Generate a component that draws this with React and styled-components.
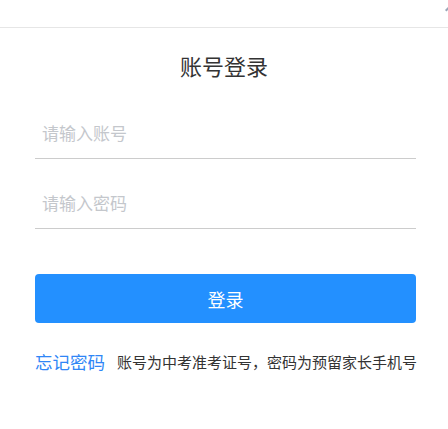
import React from 'react';
import styled, { createGlobalStyle } from 'styled-components';

const GlobalStyle = createGlobalStyle`
    html, body {
        margin: 0;
        padding: 0;
        background: #fff;
        font-family: "Noto Sans CJK SC", "Noto Sans", sans-serif;
    }
    input::placeholder {
        color: #c4c7cc;
    }
`;

const Page = styled.div`
    width: 448px;
    height: 429px;
    background: #fff;
    overflow: hidden;
`;

const TopBar = styled.div`
    position: relative;
    height: 27px;
    border-bottom: 1px solid #e6e6e6;
`;

const CornerMark = styled.span`
    position: absolute;
    right: -2px;
    top: 8px;
    width: 5px;
    height: 2px;
    background: #9aa6b8;
    transform: rotate(-45deg);
`;

const Title = styled.h2`
    margin: 22px 0 0;
    height: 30px;
    line-height: 30px;
    text-align: center;
    font-size: 22px;
    font-weight: 400;
    color: #333;
`;

const Form = styled.form`
    display: flex;
    flex-direction: column;
    padding: 0 32px 0 35px;
    margin-top: 32px;
`;

const Field = styled.input`
    display: block;
    box-sizing: border-box;
    height: 47px;
    padding: 0 0 5px 7px;
    margin: 0 0 23px;
    border: none;
    border-bottom: 1px solid #cccccc;
    outline: none;
    font-family: inherit;
    font-size: 17px;
    color: #333;
    background: transparent;
`;

const SubmitButton = styled.button`
    height: 49px;
    margin-top: 22px;
    border: none;
    border-radius: 4px;
    background: #2390ff;
    color: #fff;
    font-family: inherit;
    font-size: 18px;
`;

const Footer = styled.div`
    display: flex;
    align-items: center;
    gap: 12px;
    margin-top: 26px;
    white-space: nowrap;
`;

const ForgotLink = styled.a`
    font-size: 17.5px;
    color: #2f86f6;
    text-decoration: none;
`;

const Hint = styled.span`
    font-size: 15px;
    color: #333;
`;

const App = () => {
    return (
        <Page>
            <GlobalStyle />
            <TopBar>
                <CornerMark />
            </TopBar>
            <Title>账号登录</Title>
            <Form onSubmit={e => e.preventDefault()}>
                <Field type="text" placeholder="请输入账号" />
                <Field type="password" placeholder="请输入密码" />
                <SubmitButton type="submit">登录</SubmitButton>
                <Footer>
                    <ForgotLink href="#">忘记密码</ForgotLink>
                    <Hint>账号为中考准考证号，密码为预留家长手机号</Hint>
                </Footer>
            </Form>
        </Page>
    );
};

export default App;
